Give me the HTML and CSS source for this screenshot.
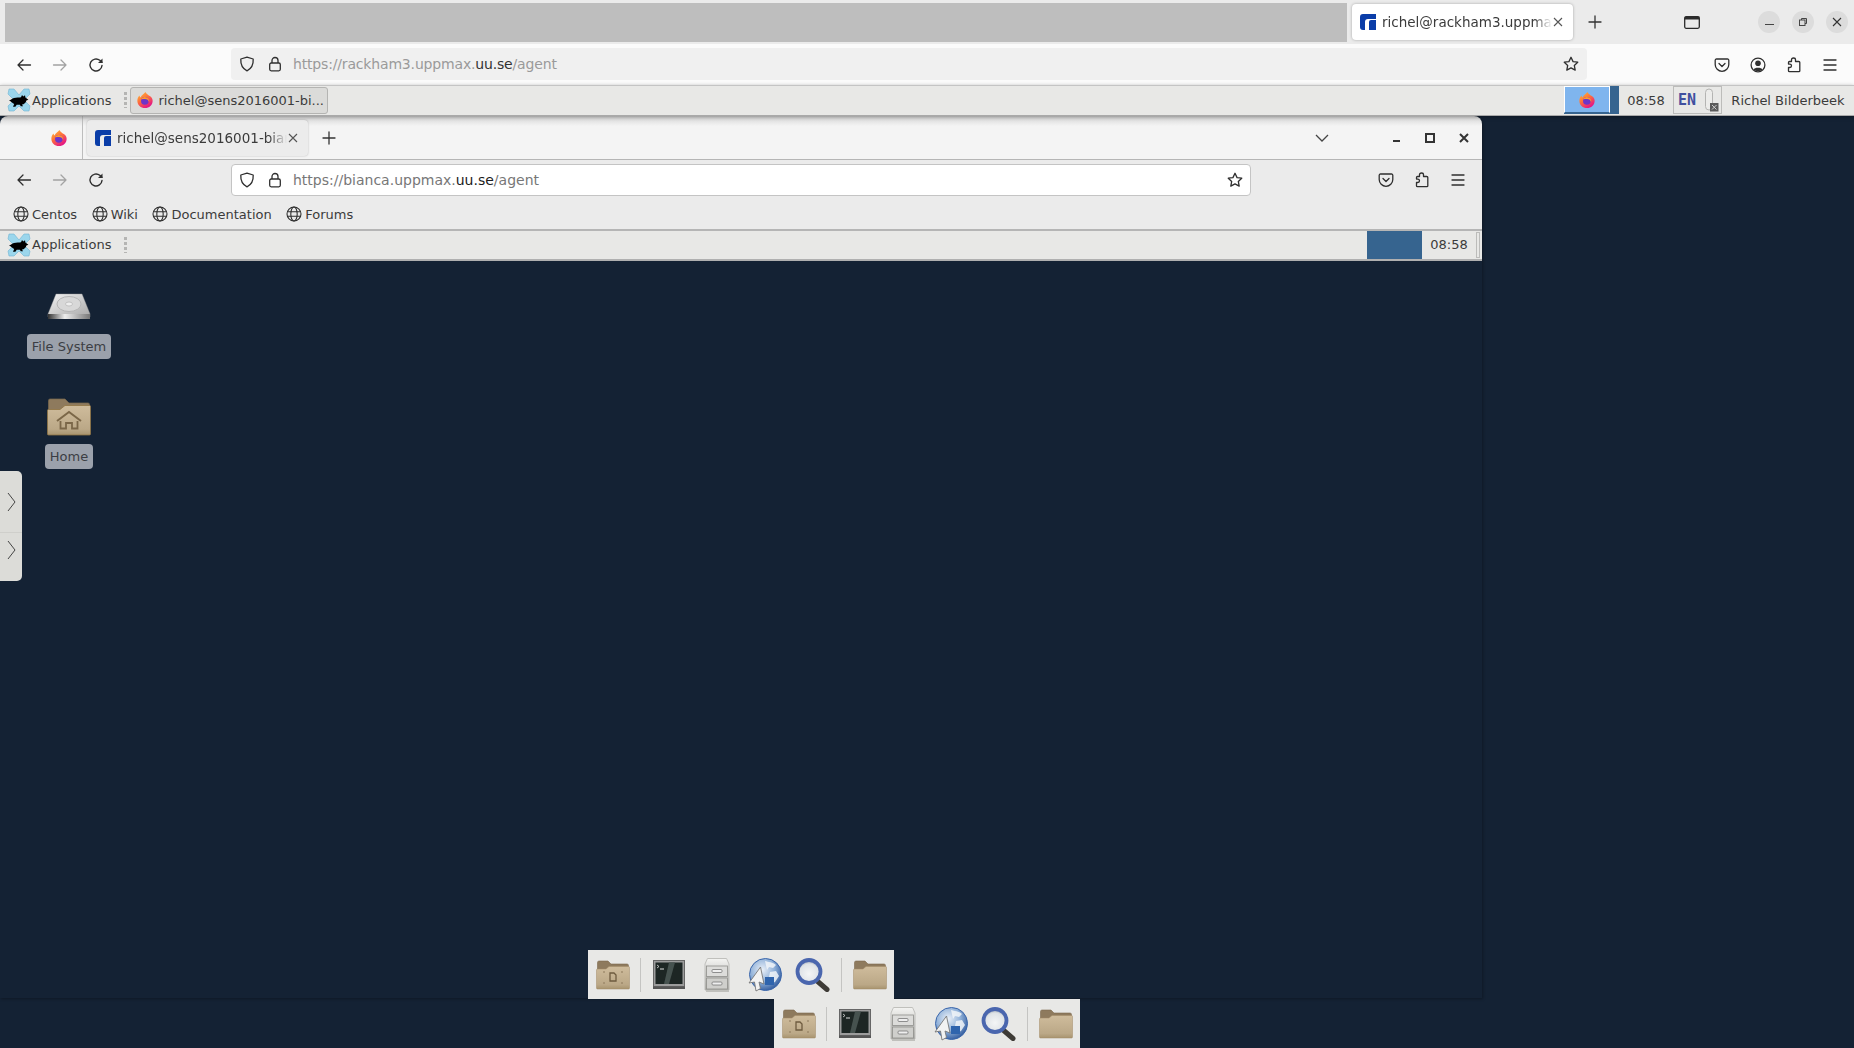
FILE: index.html
```html
<!DOCTYPE html>
<html lang="en">
<head>
<meta charset="utf-8">
<title>richel@rackham3.uppmax</title>
<link rel="stylesheet" href="styles.css">
</head>
<body>
<svg class="defs" width="0" height="0" aria-hidden="true">
  <defs>
    <linearGradient id="gFolder" x1="0" y1="0" x2="0" y2="1"><stop offset="0" stop-color="#cfbc9c"/><stop offset=".8" stop-color="#bba887"/><stop offset="1" stop-color="#a8946f"/></linearGradient>
    <linearGradient id="gDisk" x1="0" y1="0" x2="1" y2="1"><stop offset="0" stop-color="#f2f2f2"/><stop offset="1" stop-color="#a8a8a8"/></linearGradient>
    <linearGradient id="gMetal" x1="0" y1="0" x2="1" y2="0"><stop offset="0" stop-color="#333"/><stop offset=".4" stop-color="#eee"/><stop offset="1" stop-color="#777"/></linearGradient>
    <linearGradient id="gCab" x1="0" y1="0" x2="0" y2="1"><stop offset="0" stop-color="#f4f4f2"/><stop offset="1" stop-color="#a9a9a5"/></linearGradient>
    <radialGradient id="gGlobe" cx=".4" cy=".35" r=".7"><stop offset="0" stop-color="#eaf0f8"/><stop offset=".55" stop-color="#8fb0d8"/><stop offset="1" stop-color="#2c569b"/></radialGradient>
    <radialGradient id="gLens" cx=".5" cy=".6" r=".6"><stop offset="0" stop-color="#f4f5f6"/><stop offset=".7" stop-color="#dfe3e7"/><stop offset="1" stop-color="#9aa3ad"/></radialGradient>
    <linearGradient id="gFox" x1="0" y1="0" x2=".6" y2="1"><stop offset="0" stop-color="#ffc53a"/><stop offset=".5" stop-color="#ff7139"/><stop offset="1" stop-color="#e31587"/></linearGradient>

    <symbol id="i-firefox" viewBox="0 0 20 20">
      <path d="M10.5 1c.6 1.6 2.2 2.4 3.3 3.6C16.800 5.800 18.500 8 18.500 10.800 18.500 15.500 14.700 19 10 19S1.500 15.500 1.500 10.800C1.500 8.500 2.400 6.300 4 5c0 1 .4 1.700 1 2.200C6 4.600 8.500 3.600 10.500 1z" fill="url(#gFox)"/>
      <circle cx="9.800" cy="11" r="4.200" fill="#6d35c9"/>
      <path d="M5.700 9.500C6.500 6.900 9.500 5.900 12 7.200c2 1 3 3 2.600 5-.7-2-2.400-3.300-4.600-3.200-1.800 0-3 .2-4.300.5z" fill="#ff9a2e"/>
    </symbol>

    <symbol id="i-rat" viewBox="0 0 24 24">
      <path d="M2 1h5l5 6 5-6h5l1 5-6 6 6 6-1 5h-5l-5-5-5 5H2l-1-5 6-6-6-6z" fill="#9bd6ec" stroke="#6fb4d4" stroke-width=".6"/>
      <path d="M2 12.500c2-.5 3-2 5-2.500 2.500-.8 5-.4 7-.8l1-2.200 1.300 1.600 1.700-1.400.4 2.300 3 2.200-2 .8c-.6 2.500-2.300 3.800-4.400 4l1 1.800h-2.300l-.8-1.600-3.200.1-1.300 1.900H6l1.200-2.700C5.500 15 4 13.200 2 12.500z" fill="#000"/>
    </symbol>

    <symbol id="i-uppmax" viewBox="0 0 16 16">
      <path d="M3 0h13v5H8a3 3 0 0 0-3 3v8H3a3 3 0 0 1-3-3V3a3 3 0 0 1 3-3z" fill="#0a3da8"/>
      <path d="M9 8a2 2 0 0 1 2-2h5v10H9z" fill="#0a3da8"/>
    </symbol>

    <symbol id="i-back" viewBox="0 0 16 16"><path d="M14.500 8H2M7 3 2 8l5 5" fill="none" stroke="currentColor" stroke-width="1.300" stroke-linecap="round" stroke-linejoin="round"/></symbol>
    <symbol id="i-forward" viewBox="0 0 16 16"><path d="M1.500 8H14M9 3l5 5-5 5" fill="none" stroke="currentColor" stroke-width="1.300" stroke-linecap="round" stroke-linejoin="round"/></symbol>
    <symbol id="i-reload" viewBox="0 0 16 16"><path d="M14 8.500A6 6 0 1 1 11.800 3.300L14 5.200" fill="none" stroke="currentColor" stroke-width="1.400" stroke-linecap="round"/><path d="M14.500 1.500v4.500H10z" fill="currentColor"/></symbol>
    <symbol id="i-shield" viewBox="0 0 16 16"><path d="M8 1.200 14.200 3c.3 5.500-1.500 9.500-6.200 11.800C3.300 12.500 1.500 8.500 1.800 3z" fill="none" stroke="currentColor" stroke-width="1.300" stroke-linejoin="round"/></symbol>
    <symbol id="i-lock" viewBox="0 0 16 16"><path d="M5 7V4.500a3 3 0 0 1 6 0V7" fill="none" stroke="currentColor" stroke-width="1.300"/><rect x="2.700" y="7" width="10.600" height="7.800" rx="1.500" fill="none" stroke="currentColor" stroke-width="1.300"/></symbol>
    <symbol id="i-star" viewBox="0 0 16 16"><path d="m8 1.300 2.050 4.300 4.700.6-3.450 3.250.9 4.700L8 11.850l-4.200 2.300.9-4.700L1.250 6.200l4.700-.6z" fill="none" stroke="currentColor" stroke-width="1.300" stroke-linejoin="round"/></symbol>
    <symbol id="i-pocket" viewBox="0 0 16 16"><path d="M2.500 2h11A1.300 1.300 0 0 1 14.800 3.300V7.500A6.800 6.800 0 0 1 1.200 7.500V3.300A1.300 1.300 0 0 1 2.500 2z" fill="none" stroke="currentColor" stroke-width="1.300"/><path d="m5 6.500 3 3 3-3" fill="none" stroke="currentColor" stroke-width="1.300" stroke-linecap="round" stroke-linejoin="round"/></symbol>
    <symbol id="i-account" viewBox="0 0 16 16"><circle cx="8" cy="8" r="6.900" fill="none" stroke="currentColor" stroke-width="1.300"/><circle cx="8" cy="6.300" r="2.800" fill="currentColor"/><path d="M3.500 12.500C4.500 10.300 11.500 10.300 12.500 12.500 10.500 14.500 5.500 14.500 3.500 12.500z" fill="currentColor"/></symbol>
    <symbol id="i-ext" viewBox="0 0 16 16"><path d="M7.500 1c1.300 0 2 .8 2 1.800V4.500h3.300c.6 0 1 .4 1 1v8.500c0 .4-.4.700-1 .7H3.500c-.6 0-1-.3-1-.7V10.500h1.300a1.700 1.700 0 0 0 0-3.400H2.500V5.500c0-.6.400-1 1-1h2V2.800c0-1 .7-1.800 2-1.800z" fill="none" stroke="currentColor" stroke-width="1.300" stroke-linejoin="round"/></symbol>
    <symbol id="i-menu" viewBox="0 0 16 16"><path d="M2 3h12M2 8h12M2 13h12" stroke="currentColor" stroke-width="1.300" stroke-linecap="round"/></symbol>
    <symbol id="i-globe" viewBox="0 0 16 16"><circle cx="8" cy="8" r="7" fill="none" stroke="currentColor" stroke-width="1.100"/><ellipse cx="8" cy="8" rx="3.200" ry="7" fill="none" stroke="currentColor" stroke-width="1.100"/><path d="M1.500 5.700h13M1.500 10.300h13" stroke="currentColor" stroke-width="1.100"/></symbol>
    <symbol id="i-close" viewBox="0 0 12 12"><path d="m2 2 8 8M10 2l-8 8" stroke="currentColor" stroke-width="1.100"/></symbol>
    <symbol id="i-plus" viewBox="0 0 14 14"><path d="M7 1v12M1 7h12" stroke="currentColor" stroke-width="1.300" stroke-linecap="round"/></symbol>

    <symbol id="i-folder" viewBox="0 0 34 32">
      <path d="M1.500 3.500A1.500 1.500 0 0 1 3 2h9l3 3h16a1.500 1.500 0 0 1 1.500 1.500V12h-31z" fill="#8e7a5d" stroke="#7d6a4e" stroke-width=".6"/>
      <path d="M.5 11c0-.6.400-1 1-1H10l3-2.500h19.500c.6 0 1 .4 1 1V29c0 .6-.4 1-1 1h-31c-.6 0-1-.4-1-1z" fill="url(#gFolder)" stroke="#a28b66" stroke-width=".5"/>
    </symbol>

    <symbol id="i-docs" viewBox="0 0 34 32">
      <use href="#i-folder" width="34" height="32"/>
      <path d="M14 14h4l2 2v6h-6z" fill="none" stroke="#6e5b3f" stroke-width="1.300"/>
      <path d="M7 13h2M25 13h2M7 24h2M25 24h2" stroke="#8e7a5d" stroke-width="1.100"/>
    </symbol>

    <symbol id="i-home" viewBox="0 0 44 40">
      <path d="M1.500 3.500A1.500 1.500 0 0 1 3 2h15l4 4h19a1.500 1.500 0 0 1 1.500 1.500V15h-41z" fill="#8e7a5d" stroke="#7d6a4e" stroke-width=".7"/>
      <path d="M.5 13.500c0-.6.400-1 1-1H13l5-4h24.500c.6 0 1 .4 1 1V37c0 .6-.4 1-1 1h-41c-.6 0-1-.4-1-1z" fill="url(#gFolder)" stroke="#8f7443" stroke-width=".8"/>
      <path d="M10 24 22 15l12 9" fill="none" stroke="#7b6748" stroke-width="2"/>
      <path d="M13.500 24v7.500h5.500V26h6v5.500h5.500V24" fill="none" stroke="#7b6748" stroke-width="1.800"/>
    </symbol>

    <symbol id="i-disk" viewBox="0 0 44 28">
      <path d="M9 1h26l8 20v3H1v-3z" fill="url(#gDisk)" stroke="#999" stroke-width=".4"/>
      <ellipse cx="22" cy="11" rx="12" ry="7.500" fill="#d8d8d8" stroke="#b5b5b5"/>
      <ellipse cx="22" cy="11" rx="3.500" ry="2" fill="#eee" stroke="#aaa" stroke-width=".6"/>
      <rect x="1" y="21" width="42" height="5" fill="url(#gMetal)"/>
    </symbol>

    <symbol id="i-term" viewBox="0 0 32 29">
      <rect x=".5" y=".5" width="31" height="26" fill="#9c9c9c" stroke="#666"/>
      <rect x="2.500" y="2.500" width="27" height="21.500" fill="#1d2624"/>
      <path d="M16 2.500h6l-6 21.500h-5z" fill="#46524f"/>
      <path d="M4 5l2 1.500L4 8" fill="none" stroke="#ddd" stroke-width=".8"/>
      <path d="M7 9h4" stroke="#ddd" stroke-width="1"/>
      <rect x="0" y="26.500" width="32" height="2.500" fill="#555"/>
    </symbol>

    <symbol id="i-cabinet" viewBox="0 0 26 34">
      <path d="M3 1.500C3 .8 3.500.5 4 .5h18c.5 0 1 .3 1 1L25 6v26H1V6z" fill="url(#gCab)" stroke="#b4b4b0" stroke-width=".8"/>
      <rect x="2.500" y="8" width="21" height="10.500" fill="#dcdcda" stroke="#8e8e8b" stroke-width=".8"/>
      <rect x="2.500" y="20" width="21" height="11" fill="#cfcfcc" stroke="#8e8e8b" stroke-width=".8"/>
      <rect x="8" y="11.500" width="10" height="3" rx="1" fill="#eee" stroke="#777" stroke-width=".8"/>
      <rect x="8" y="24" width="10" height="3" rx="1" fill="#eee" stroke="#777" stroke-width=".8"/>
      <rect x="2" y="32" width="23" height="2" fill="#c0c0bc"/>
    </symbol>

    <symbol id="i-web" viewBox="0 0 34 34">
      <circle cx="17.500" cy="16.500" r="16" fill="url(#gGlobe)" stroke="#3a66ab" stroke-width="1"/>
      <path d="M17 3c3 1 8 1 11 4l-3 3-4-1-2 3zM22 14l6-1 3 5-4 6-5 2-1-7z" fill="#f1f4f8" opacity=".85"/>
      <rect x="17" y="19" width="9" height="8" fill="#2f64ad"/>
      <path d="M12.500 9 1 25l5.500-1L8 33l4.500-2.500-1.500-6.500 5 2z" fill="#f2f2f2" stroke="#777" stroke-width=".9" stroke-linejoin="round"/>
    </symbol>

    <symbol id="i-search" viewBox="0 0 36 34">
      <path d="M21 22l11 9.500" stroke="#3e3b36" stroke-width="5" stroke-linecap="round"/>
      <circle cx="14" cy="13.500" r="11.500" fill="url(#gLens)" stroke="#4a66ae" stroke-width="3.800"/>
    </symbol>
  </defs>
</svg>

<div class="screen">
  <div class="chrome-tabs">
    <div class="tab-spacer"></div>
    <div class="tab tab-active">
      <svg class="i16"><use href="#i-uppmax"/></svg>
      <span class="tab-title">richel@rackham3.uppmax</span>
      <svg class="i12"><use href="#i-close"/></svg>
    </div>
    <svg class="i14 tab-plus"><use href="#i-plus"/></svg>
    <div class="win-tools">
      <svg class="list-all" width="16" height="13" viewBox="0 0 16 13"><rect x=".7" y=".7" width="14.600" height="11.600" rx="1.500" fill="none" stroke="#2b2b2b" stroke-width="1.300"/><rect x=".7" y=".7" width="14.600" height="2.800" fill="#2b2b2b"/></svg>
      <div class="circle-btn"><span class="min-line"></span></div>
      <div class="circle-btn"><svg width="10" height="10" viewBox="0 0 10 10"><rect x="1.500" y="3" width="5.500" height="5.500" fill="none" stroke="#444"/><path d="M3.500 3V1.500H8.500V6.500H7" fill="none" stroke="#444"/></svg></div>
      <div class="circle-btn"><svg class="i12 dark"><use href="#i-close"/></svg></div>
    </div>
  </div>

  <div class="navbar navbar-outer">
    <div class="nav-left">
      <svg class="i16"><use href="#i-back"/></svg>
      <svg class="i16 faint"><use href="#i-forward"/></svg>
      <svg class="i16"><use href="#i-reload"/></svg>
    </div>
    <div class="urlbar urlbar-outer">
      <svg class="i16"><use href="#i-shield"/></svg>
      <svg class="i16"><use href="#i-lock"/></svg>
      <span class="url url-dim">https://rackham3.uppmax.<b>uu.se</b>/agent</span>
      <svg class="i16 url-star"><use href="#i-star"/></svg>
    </div>
    <div class="nav-right">
      <svg class="i16"><use href="#i-pocket"/></svg>
      <svg class="i16"><use href="#i-account"/></svg>
      <svg class="i16"><use href="#i-ext"/></svg>
      <svg class="i16"><use href="#i-menu"/></svg>
    </div>
  </div>

  <div class="panel panel-outer">
    <svg class="rat"><use href="#i-rat"/></svg>
    <span class="panel-text">Applications</span>
    <span class="grip"></span>
    <div class="task">
      <svg class="i18"><use href="#i-firefox"/></svg>
      <span class="task-title">richel@sens2016001-bi...</span>
    </div>
    <div class="panel-fill"></div>
    <div class="pager"><span class="pager-active"><svg class="i18"><use href="#i-firefox"/></svg></span></div>
    <span class="clock">08:58</span>
    <div class="tray">
      <span class="en">EN</span>
      <svg width="16" height="24" viewBox="0 0 16 24"><rect x="1.500" y="1" width="7" height="21" rx="3.500" fill="#ececea" stroke="#b4b4b2"/><rect x="6" y="15" width="8.500" height="8.500" fill="#5a5a5a"/><path d="m8 17 4.500 4.500m0-4.500L8 21.500" stroke="#ccc"/></svg>
    </div>
    <span class="user">Richel Bilderbeek</span>
  </div>

  <div class="window">
    <div class="win-tabs">
      <div class="ff-slot"><svg class="i18"><use href="#i-firefox"/></svg></div>
      <div class="tab tab-inner">
        <svg class="i16"><use href="#i-uppmax"/></svg>
        <span class="tab-title">richel@sens2016001-bianca</span>
        <svg class="i12"><use href="#i-close"/></svg>
      </div>
      <svg class="i14 tab-plus-inner"><use href="#i-plus"/></svg>
      <div class="win-fill"></div>
      <svg class="chevron" width="14" height="8" viewBox="0 0 14 8"><path d="m1 1 6 6 6-6" fill="none" stroke="#444" stroke-width="1.300"/></svg>
      <div class="wm-btns">
        <svg width="12" height="12" viewBox="0 0 12 12"><rect x="3" y="8" width="7" height="2" fill="#333"/></svg>
        <svg width="12" height="12" viewBox="0 0 12 12"><rect x="2" y="2" width="8" height="8" fill="none" stroke="#333" stroke-width="2"/></svg>
        <svg width="12" height="12" viewBox="0 0 12 12"><path d="m2 2 8 8m0-8-8 8" stroke="#333" stroke-width="2"/></svg>
      </div>
    </div>

    <div class="navbar navbar-inner">
      <div class="nav-left">
        <svg class="i16"><use href="#i-back"/></svg>
        <svg class="i16 faint"><use href="#i-forward"/></svg>
        <svg class="i16"><use href="#i-reload"/></svg>
      </div>
      <div class="urlbar urlbar-inner">
        <svg class="i16"><use href="#i-shield"/></svg>
        <svg class="i16"><use href="#i-lock"/></svg>
        <span class="url">https://bianca.uppmax.<b>uu.se</b>/agent</span>
        <svg class="i16 url-star"><use href="#i-star"/></svg>
      </div>
      <div class="nav-right nav-right-inner">
        <svg class="i16"><use href="#i-pocket"/></svg>
        <svg class="i16"><use href="#i-ext"/></svg>
        <svg class="i16"><use href="#i-menu"/></svg>
      </div>
    </div>

    <div class="bookmarks">
      <span class="bm"><svg class="i16"><use href="#i-globe"/></svg>Centos</span>
      <span class="bm"><svg class="i16"><use href="#i-globe"/></svg>Wiki</span>
      <span class="bm"><svg class="i16"><use href="#i-globe"/></svg>Documentation</span>
      <span class="bm"><svg class="i16"><use href="#i-globe"/></svg>Forums</span>
    </div>

    <div class="panel panel-inner">
      <svg class="rat"><use href="#i-rat"/></svg>
      <span class="panel-text">Applications</span>
      <span class="grip"></span>
      <div class="panel-fill"></div>
      <span class="blue-block"></span>
      <span class="clock clock-inner">08:58</span>
      <span class="handle"></span>
    </div>

    <div class="desktop">
      <div class="desk-item desk-disk">
        <svg class="disk-icon"><use href="#i-disk"/></svg>
        <span class="desk-label">File System</span>
      </div>
      <div class="desk-item desk-home">
        <svg class="home-icon"><use href="#i-home"/></svg>
        <span class="desk-label">Home</span>
      </div>
    </div>
  </div>

  <div class="side-tabs">
    <div class="side-tab side-tab-first"><svg width="9" height="20" viewBox="0 0 9 20"><path d="m1 1 7 9-7 9" fill="none" stroke="#333" stroke-width=".9"/></svg></div>
    <div class="side-tab side-tab-second"><svg width="9" height="20" viewBox="0 0 9 20"><path d="m1 1 7 9-7 9" fill="none" stroke="#333" stroke-width=".9"/></svg></div>
  </div>

  <div class="dock dock-upper">
    <svg class="d-docs"><use href="#i-docs"/></svg><span class="dock-sep"></span>
    <svg class="d-term"><use href="#i-term"/></svg>
    <svg class="d-cab"><use href="#i-cabinet"/></svg>
    <svg class="d-web"><use href="#i-web"/></svg>
    <svg class="d-search"><use href="#i-search"/></svg><span class="dock-sep"></span>
    <svg class="d-folder"><use href="#i-folder"/></svg>
  </div>
  <div class="dock dock-lower">
    <svg class="d-docs"><use href="#i-docs"/></svg><span class="dock-sep"></span>
    <svg class="d-term"><use href="#i-term"/></svg>
    <svg class="d-cab"><use href="#i-cabinet"/></svg>
    <svg class="d-web"><use href="#i-web"/></svg>
    <svg class="d-search"><use href="#i-search"/></svg><span class="dock-sep"></span>
    <svg class="d-folder"><use href="#i-folder"/></svg>
  </div>
</div>
</body>
</html>
```

FILE: styles.css
```css
* { box-sizing: border-box; }
html, body { margin: 0; padding: 0; width: 100%; height: 100%; overflow: hidden; }
body { background: #142234; font-family: "DejaVu Sans", sans-serif; font-size: 13px; color: #3b3b3b; }
svg { display: block; flex: none; }
.defs { position: absolute; }
.i12 { width: 12px; height: 12px; color: #555; }
.i14 { width: 14px; height: 14px; color: #333; }
.i16 { width: 16px; height: 16px; color: #2f2f2f; }
.i18 { width: 18px; height: 18px; }
.dark { color: #333; }
.faint { color: #a3a3a3; }

.screen { position: relative; width: 1854px; height: 1048px; background: #142234; overflow: hidden; }

.chrome-tabs { height: 44px; background: #ebebeb; display: flex; align-items: flex-start; padding: 3px 0 0 5px; }
.tab-spacer { width: 1342px; height: 39px; background: #bebebe; }
.tab { display: flex; align-items: center; border-radius: 4px; }
.tab-active { width: 221px; height: 36px; margin: 1px 0 0 5px; background: #fff; padding: 0 9px 0 8px; box-shadow: 0 0 3px rgba(0,0,0,.3); }
.tab-title { flex: 1; min-width: 0; margin-left: 6px; white-space: nowrap; font-size: 13.5px; -webkit-mask-image: linear-gradient(to left, transparent 0, #000 18px); mask-image: linear-gradient(to left, transparent 0, #000 18px); }
.tab-plus { margin: 12px 0 0 15px; }
.win-tools { margin-left: auto; display: flex; align-items: center; height: 38px; padding-right: 6px; }
.list-all { margin-right: 58px; }
.circle-btn { width: 22px; height: 22px; border-radius: 50%; background: #dcdcdc; display: flex; align-items: center; justify-content: center; margin-left: 12px; }
.list-all + .circle-btn { margin-left: 0; }
.min-line { width: 9px; height: 1px; margin-top: 5px; background: #444; }

.navbar { display: flex; align-items: center; }
.navbar-outer { height: 41px; background: #fbfbfb; }
.navbar-inner { height: 41px; flex: none; background: #ebebeb; border-top: 1px solid #b5b5b5; }
.nav-left { width: 231px; display: flex; align-items: center; gap: 20px; padding-left: 16px; }
.urlbar { display: flex; align-items: center; height: 32px; border-radius: 4px; padding-left: 8px; }
.urlbar-outer { width: 1356px; background: #f0f0f0; margin-top: -1px; }
.urlbar-inner { width: 1020px; background: #fff; border: 1px solid #c4c4c4; }
.urlbar-inner .i16:first-child { margin-left: -1px; }
.urlbar .i16 + .i16 { margin-left: 12px; }
.url { margin-left: 10px; font-size: 14px; color: #777; white-space: nowrap; }
.url b { font-weight: normal; color: #1c1c1c; }
.url-dim { color: #9a9a9a; letter-spacing: -.17px; }
.url-dim b { color: #333; }
.url-star { margin-left: auto; margin-right: 8px; }
.urlbar-inner .url-star { margin-right: 7px; }
.nav-right { display: flex; align-items: center; gap: 20px; margin-left: 127px; }

.panel { display: flex; align-items: center; background: #e8e8e6; }
.panel-outer { height: 31px; border-top: 1px solid #c4c4c4; border-bottom: 1px solid #a9a9a9; padding-bottom: 1px; box-shadow: 0 1px 4px rgba(0,0,0,.35); position: relative; z-index: 2; }
.panel-inner { height: 32px; flex: none; border-top: 2px solid #b5b5b5; border-bottom: 2px solid #b0b0b0; padding-bottom: 1px; }
.rat { width: 24px; height: 24px; margin-left: 7px; }
.panel-text { margin-left: 1px; white-space: nowrap; }
.grip { width: 3px; height: 16px; margin-left: 13px; background: repeating-linear-gradient(to bottom, #b5b5b3 0 3px, transparent 3px 5px); }
.task { width: 198px; height: 27px; margin-left: 3px; display: flex; align-items: center; gap: 4px; padding-left: 5px; background: #dbdbd9; border: 1px solid #b4b4b2; border-radius: 3px; }
.task-title { white-space: nowrap; }
.panel-fill { flex: 1; }
.pager { width: 55px; height: 28px; background: #36648f; }
.pager-active { display: flex; align-items: center; justify-content: center; width: 46px; height: 27px; background: #7fb5ee; border: 1px solid #fff; border-bottom: 1px solid #36648f; }
.clock { width: 54px; text-align: center; white-space: nowrap; }
.tray { width: 49px; height: 28px; border: 1px solid #bcbcba; display: flex; align-items: center; gap: 8px; padding-left: 4px; }
.en { font-weight: bold; font-family: "DejaVu Sans Mono", monospace; font-size: 15px; color: #40509f; }
.user { width: 132px; text-align: center; white-space: nowrap; }
.blue-block { width: 55px; height: 28px; background: #36648f; margin-bottom: -1px; }
.handle { width: 4px; height: 26px; margin-right: 2px; border: 1px solid #bcbcba; }

.window { width: 1482px; height: 882px; background: #142234; box-shadow: 1px 1px 3px rgba(0,0,0,.3); display: flex; flex-direction: column; border-radius: 8px 8px 0 0; overflow: hidden; }
.win-tabs { height: 43px; display: flex; align-items: center; flex: none; background: linear-gradient(to bottom, #d4d4d4 0, #f4f4f4 10px); }
.ff-slot { width: 83px; height: 100%; display: flex; align-items: center; justify-content: flex-end; padding-right: 14px; border-right: 1px solid #bdbdbd; }
.tab-inner { width: 221px; height: 36px; margin-left: 4px; background: #ececec; padding: 0 9px 0 8px; box-shadow: 0 0 2px rgba(0,0,0,.25); }
.tab-plus-inner { margin-left: 14px; }
.win-fill { flex: 1; }
.chevron { margin-right: 61px; }
.wm-btns { display: flex; gap: 22px; padding-right: 12px; }

.bookmarks { height: 29px; flex: none; background: #ebebeb; display: flex; align-items: center; padding: 0 0 1px 13px; gap: 14.5px; }
.bm { display: flex; align-items: center; gap: 3px; white-space: nowrap; }

.desktop { flex: 1; padding-top: 32px; display: flex; flex-direction: column; align-items: center; width: 138px; }
.desk-item { display: flex; flex-direction: column; align-items: center; }
.desk-home { margin-top: 38px; }
.disk-icon { width: 44px; height: 28px; }
.home-icon { width: 44px; height: 40px; }
.desk-disk .desk-label { margin-top: 13px; }
.desk-home .desk-label { margin-top: 7px; }
.desk-label { height: 25px; line-height: 25px; padding: 0 4.5px; border-radius: 4px; background: #9ba1ab; color: #3b3e44; white-space: nowrap; }

.side-tabs { position: absolute; left: 0; top: 471px; width: 22px; height: 110px; background: #dcdcd8; border-radius: 0 5px 5px 0; display: flex; flex-direction: column; }
.side-tab { display: flex; align-items: center; padding-left: 7px; }
.side-tab-first { height: 62px; border-bottom: 1px solid #cfcfcb; }
.side-tab-second { height: 48px; padding-bottom: 14px; }

.dock { position: absolute; width: 306px; height: 49px; background: #e8e8e6; display: flex; align-items: center; padding-left: 8px; }
.dock-upper { left: 588px; top: 950px; }
.dock-lower { left: 774px; top: 999px; }
.dock-sep { width: 1px; height: 34px; background: #c4c4c2; margin: 0 12px 0 10px; }
.d-docs { width: 34px; height: 32px; }
.d-term { width: 32px; height: 29px; }
.d-cab { width: 26px; height: 34px; margin-left: 19px; }
.d-web { width: 34px; height: 34px; margin-left: 18px; }
.d-search { width: 36px; height: 34px; margin-left: 13px; }
.d-folder { width: 34px; height: 32px; margin-left: -1px; }
```
